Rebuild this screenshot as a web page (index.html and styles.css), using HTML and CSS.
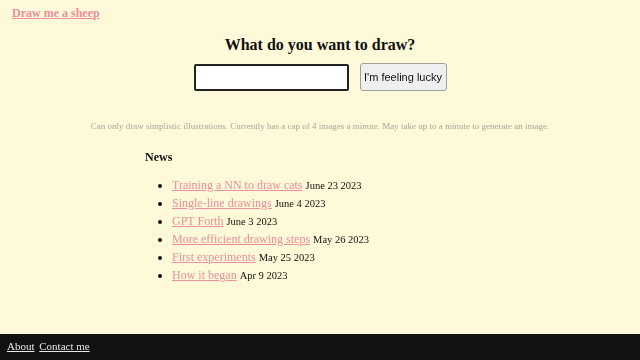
FILE: index.html
```html
<!DOCTYPE html>
<html lang="en">
<head>
  <meta charset="UTF-8">
  <title>Draw me a sheep</title>
  <link rel="stylesheet" href="styles.css">
</head>
<body>
  <header class="top">
    <a href="#" class="brand">Draw me a sheep</a>
  </header>

  <main class="page">
    <h1 class="title">What do you want to draw?</h1>
    <form class="prompt">
      <input type="text" class="prompt-input" autofocus>
      <button type="button" class="lucky">I'm feeling lucky</button>
    </form>
    <p class="note">Can only draw simplistic illustrations. Currently has a cap of 4 images a minute. May take up to a minute to generate an image.</p>

    <section class="news">
      <h2>News</h2>
      <ul>
        <li><a href="#">Training a NN to draw cats</a> <span class="date">June 23 2023</span></li>
        <li><a href="#">Single-line drawings</a> <span class="date">June 4 2023</span></li>
        <li><a href="#">GPT Forth</a> <span class="date">June 3 2023</span></li>
        <li><a href="#">More efficient drawing steps</a> <span class="date">May 26 2023</span></li>
        <li><a href="#">First experiments</a> <span class="date">May 25 2023</span></li>
        <li><a href="#">How it began</a> <span class="date">Apr 9 2023</span></li>
      </ul>
    </section>
  </main>

  <footer class="foot">
    <a href="#">About</a>
    <a href="#">Contact me</a>
  </footer>
</body>
</html>
```

FILE: styles.css
```css
body {
  margin: 0;
  min-height: 100vh;
  display: flex;
  flex-direction: column;
  background-color: #fefad9;
  font-family: 'Liberation Serif', 'Times New Roman', serif;
  color: #111;
}

a {
  color: #ec8e9c;
}

.top {
  padding: 5px 12px 0;
  line-height: 14px;
}

.brand {
  font-weight: bold;
  font-size: 12px;
}

.page {
  flex: 1;
}

.title {
  text-align: center;
  font-size: 16px;
  line-height: 18px;
  margin: 16px 0 9px;
}

.prompt {
  display: flex;
  justify-content: center;
  align-items: center;
  gap: 11px;
}

.prompt-input {
  box-sizing: border-box;
  width: 155px;
  height: 27px;
  padding: 1px 3px;
  border: 2px solid #222;
  border-radius: 2px;
  background: #fff;
  outline: none;
}

.lucky {
  box-sizing: border-box;
  font-family: 'Liberation Sans', Arial, sans-serif;
  font-size: 11px;
  width: 87px;
  height: 28px;
  padding: 0;
  background: #efefef;
  border: 1px solid #a0a0a0;
  border-radius: 3px;
  color: #111;
}

.note {
  text-align: center;
  font-size: 9px;
  line-height: 10px;
  color: #a6a696;
  margin: 30px 0 19px;
}

.news {
  width: 350px;
  margin: 0 auto;
}

.news h2 {
  font-size: 12px;
  line-height: 14px;
  margin: 0 0 12px;
}

.news ul {
  margin: 0;
  padding-left: 27px;
  font-size: 12px;
}

.news li {
  height: 18px;
  line-height: 18px;
}

.news .date {
  font-size: 10.5px;
  line-height: 1;
}

.foot {
  background-color: #121212;
  padding: 6px 7px 7px;
  font-size: 11px;
  line-height: 13px;
}

.foot a {
  color: #e8e8e8;
  margin-right: 2px;
}
```
